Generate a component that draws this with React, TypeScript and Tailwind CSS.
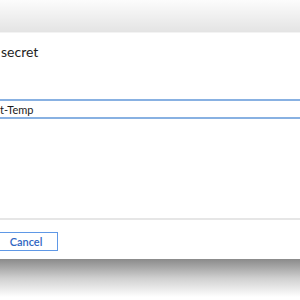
import React from 'react';

export default function App() {
    return (
        <div className="w-[300px] h-[300px] bg-white flex flex-col overflow-hidden font-['Lato','Liberation_Sans',sans-serif]">
            {/* backdrop above dialog */}
            <div className="h-[32px] shrink-0 bg-gradient-to-b from-[#fcfcfc] to-[#e4e4e4]" />
            <div className="h-[1px] shrink-0 bg-[#f3f3f3]" />

            {/* dialog */}
            <div className="h-[226px] shrink-0 bg-white flex flex-col">
                <div className="h-[66px] shrink-0 pl-[1px] pt-[9px]">
                    <h2 className="text-[14px] leading-[20px] text-[#1f1f1f]">secret</h2>
                </div>
                <div className="h-[20px] shrink-0 border-y-2 border-[#88b1e2] flex items-center">
                    <span className="text-[11px] leading-none text-[#1a1a1a]">t-Temp</span>
                </div>
                <div className="h-[99px] shrink-0" />
                <div className="h-[2px] shrink-0 bg-[#e6e6e6]" />
                <div className="flex-1 flex items-start pt-[12px]">
                    <button className="-ml-[6px] w-[64px] h-[19px] border border-[#5f98e6] bg-white flex items-center justify-center text-[11px] leading-none font-semibold text-[#2f66c2]">
                        Cancel
                    </button>
                </div>
            </div>

            {/* drop shadow below dialog */}
            <div className="h-[38px] shrink-0 bg-gradient-to-b from-[#8a8a8a] via-[#cfcfcf] to-white" />
            <div className="flex-1 bg-white" />
        </div>
    );
}
